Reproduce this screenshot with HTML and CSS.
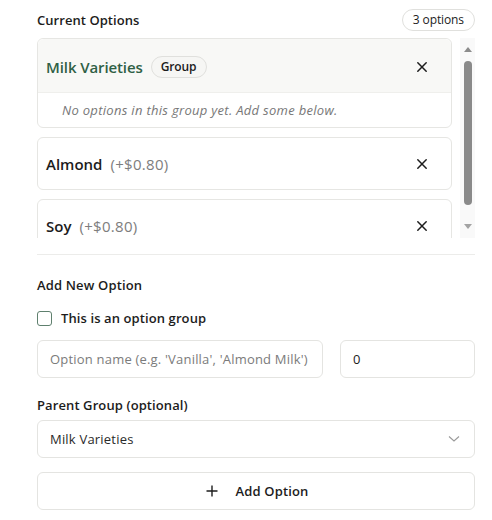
FILE: index.html
```html
<!DOCTYPE html>
<html>
<head>
<meta charset="utf-8">
<link rel="stylesheet" href="styles.css">
</head>
<body>
<div class="panel">
  <div class="head-row">
    <h3 class="section-title">Current Options</h3>
    <span class="count-pill">3 options</span>
  </div>

  <div class="list-wrap">
    <div class="list">
      <div class="card group-card">
        <div class="group-head">
          <span class="group-name">Milk Varieties</span>
          <span class="group-pill">Group</span>
          <button class="remove" aria-label="Remove">
            <svg width="12" height="12" viewBox="0 0 12 12"><path d="M1.8 1.8 L10.2 10.2 M10.2 1.8 L1.8 10.2" stroke="#1d1d1d" stroke-width="1.5" stroke-linecap="round"/></svg>
          </button>
        </div>
        <div class="group-body">No options in this group yet. Add some below.</div>
      </div>
      <div class="card option-card">
        <span class="opt-name">Almond</span>
        <span class="opt-price">(+$0.80)</span>
        <button class="remove" aria-label="Remove">
          <svg width="12" height="12" viewBox="0 0 12 12"><path d="M1.8 1.8 L10.2 10.2 M10.2 1.8 L1.8 10.2" stroke="#1d1d1d" stroke-width="1.5" stroke-linecap="round"/></svg>
        </button>
      </div>
      <div class="card option-card">
        <span class="opt-name">Soy</span>
        <span class="opt-price">(+$0.80)</span>
        <button class="remove" aria-label="Remove">
          <svg width="12" height="12" viewBox="0 0 12 12"><path d="M1.8 1.8 L10.2 10.2 M10.2 1.8 L1.8 10.2" stroke="#1d1d1d" stroke-width="1.5" stroke-linecap="round"/></svg>
        </button>
      </div>
    </div>
    <div class="scrollbar" aria-hidden="true">
      <span class="arrow-up"></span>
      <span class="thumb"></span>
      <span class="arrow-down"></span>
    </div>
  </div>

  <div class="divider"></div>

  <h3 class="section-title add-title">Add New Option</h3>
  <label class="check-row">
    <span class="checkbox"></span>
    <span class="check-label">This is an option group</span>
  </label>

  <div class="input-row">
    <div class="field name-field"><span class="placeholder">Option name (e.g. 'Vanilla', 'Almond Milk')</span></div>
    <div class="field price-field">0</div>
  </div>

  <div class="field-label">Parent Group (optional)</div>
  <div class="field select-field">
    <span>Milk Varieties</span>
    <svg width="12" height="8" viewBox="0 0 12 8"><path d="M1 1.5 L6 6 L11 1.5" fill="none" stroke="#9a9a9a" stroke-width="1.1"/></svg>
  </div>

  <button class="add-btn">
    <svg width="12" height="12" viewBox="0 0 12 12"><path d="M6 0.5 V11.5 M0.5 6 H11.5" stroke="#1d1d1d" stroke-width="1.4"/></svg>
    <span>Add Option</span>
  </button>
</div>
</body>
</html>
```

FILE: styles.css
```css
* { box-sizing: border-box; }
html, body { margin: 0; padding: 0; background: #ffffff; }
body {
  font-family: "Open Sans", "Noto Sans", sans-serif;
  color: #1c1c1c;
  width: 492px;
  height: 520px;
  overflow: hidden;
}
.panel {
  padding: 9px 17px 0 37px;
  display: flex;
  flex-direction: column;
}
.head-row {
  display: flex;
  justify-content: space-between;
  align-items: center;
  height: 22px;
}
.section-title {
  margin: 0;
  font-size: 13px;
  font-weight: 600;
  letter-spacing: 0.05px;
  color: #1c1c1c;
}
.count-pill {
  border: 1px solid #e0e0dd;
  border-radius: 11px;
  height: 22px;
  padding: 0 10px;
  font-size: 12px;
  line-height: 20px;
  letter-spacing: -0.1px;
  color: #1c1c1c;
}
.list-wrap {
  margin-top: 7px;
  height: 200px;
  display: flex;
  overflow: hidden;
}
.list {
  flex: 1;
  margin-right: 8px;
  display: flex;
  flex-direction: column;
  gap: 9px;
}
.card {
  border: 1px solid #e6e6e3;
  border-radius: 6px;
  background: #fff;
  flex-shrink: 0;
}
.group-head {
  height: 53px;
  background: #f8f8f6;
  border-radius: 6px 6px 0 0;
  display: flex;
  align-items: center;
  padding-left: 8px;
  padding-top: 2px;
}
.group-name {
  font-size: 15px;
  font-weight: 600;
  color: #2f6045;
  letter-spacing: -0.1px;
}
.group-pill {
  margin-left: 8px;
  height: 22px;
  border: 1px solid #e0e0dd;
  border-radius: 11px;
  background: #f6f6f4;
  padding: 0 9px;
  font-size: 12px;
  line-height: 20px;
  font-weight: 600;
  letter-spacing: -0.1px;
  color: #1c1c1c;
}
.remove {
  margin-left: auto;
  margin-right: 17px;
  width: 24px;
  height: 24px;
  border: 0;
  background: transparent;
  padding: 0;
  display: flex;
  align-items: center;
  justify-content: center;
}
.group-body {
  height: 35px;
  border-top: 1px solid #efefec;
  padding-left: 24px;
  display: flex;
  align-items: center;
  font-size: 13px;
  font-style: italic;
  color: #777;
  letter-spacing: 0.3px;
}
.option-card {
  height: 53px;
  display: flex;
  align-items: center;
  padding-left: 8px;
}
.opt-name {
  font-size: 15px;
  font-weight: 600;
  letter-spacing: 0;
  color: #1c1c1c;
}
.opt-price {
  margin-left: 8px;
  font-size: 15px;
  color: #7d7d7d;
  letter-spacing: 0.3px;
}
.scrollbar {
  width: 15px;
  flex-shrink: 0;
  background: #f9f9f9;
  display: flex;
  flex-direction: column;
  align-items: center;
  padding-top: 9px;
}
.arrow-up {
  width: 0; height: 0;
  border-left: 4px solid transparent;
  border-right: 4px solid transparent;
  border-bottom: 5px solid #8c8c8c;
}
.thumb {
  margin-top: 9px;
  width: 8px;
  height: 144px;
  border-radius: 4px;
  background: #8a8a8a;
}
.arrow-down {
  margin-top: 19px;
  width: 0; height: 0;
  border-left: 4px solid transparent;
  border-right: 4px solid transparent;
  border-top: 5px solid #a3a3a3;
}
.divider {
  margin-top: 16px;
  height: 1px;
  background: #ececea;
}
.add-title {
  margin-top: 22px;
  line-height: 16px;
  letter-spacing: 0.15px;
}
.check-row {
  margin-top: 17px;
  display: flex;
  align-items: center;
  height: 16px;
}
.checkbox {
  width: 15px;
  height: 15px;
  border: 1.5px solid #5f806e;
  border-radius: 3px;
}
.check-label {
  margin-left: 9px;
  font-size: 13px;
  font-weight: 600;
  letter-spacing: 0.1px;
}
.input-row {
  margin-top: 14px;
  display: flex;
  gap: 17px;
}
.field {
  height: 38px;
  border: 1px solid #e4e4e1;
  border-radius: 6px;
  display: flex;
  align-items: center;
  padding: 0 12px;
  font-size: 13px;
  letter-spacing: 0.2px;
  background: #fff;
}
.name-field { width: 286px; white-space: nowrap; overflow: hidden; }
.price-field { flex: 1; }
.placeholder { color: #7b7b7b; }
.field-label {
  margin-top: 19px;
  font-size: 13px;
  font-weight: 600;
  letter-spacing: 0.1px;
  line-height: 16px;
}
.select-field {
  margin-top: 7px;
  justify-content: space-between;
  color: #2a2a2a;
  padding-right: 14px;
}
.add-btn {
  margin-top: 14px;
  height: 38px;
  border: 1px solid #e4e4e1;
  border-radius: 6px;
  background: #fff;
  display: flex;
  align-items: center;
  justify-content: center;
  gap: 18px;
  font-family: inherit;
  font-size: 13px;
  font-weight: 600;
  letter-spacing: 0.15px;
  color: #1c1c1c;
  padding: 0 0 0 2px;
}
```
